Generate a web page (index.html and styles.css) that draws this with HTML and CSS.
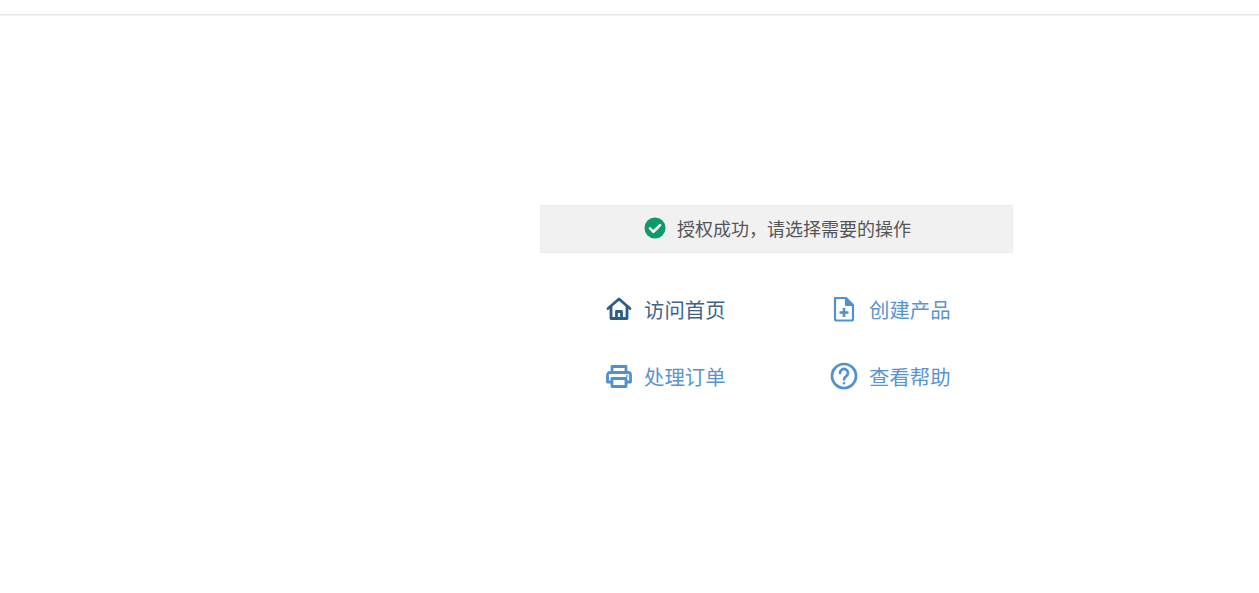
FILE: index.html
```html
<!DOCTYPE html>
<html lang="zh-CN">
<head>
<meta charset="utf-8">
<title>授权成功</title>
<link rel="stylesheet" href="styles.css">
</head>
<body>
<header class="topbar"></header>
<main class="panel">
  <div class="notice">
    <svg class="notice-icon" viewBox="0 0 22 22" width="22" height="22"><circle cx="11" cy="11" r="10.5" fill="#0b9a68"/><path d="M6 11.4l3.4 3.3L16 8.2" fill="none" stroke="#fff" stroke-width="2.6" stroke-linecap="round" stroke-linejoin="round"/></svg>
    <span class="notice-text">授权成功，请选择需要的操作</span>
  </div>
  <nav class="actions">
    <a class="action action-active" href="#">
      <span class="icon-slot"><svg viewBox="0 0 26 24" width="26" height="24" fill="none" stroke="currentColor" stroke-width="2.8" stroke-linejoin="round" stroke-linecap="round"><path d="M2 11.5 13 2l11 9.5"/><path d="M5 9.5V21.5h16V9.5"/><path d="M10.5 21v-6.5h5V21"/></svg></span>
      <span>访问首页</span>
    </a>
    <a class="action" href="#">
      <span class="icon-slot"><svg viewBox="0 0 24 26" width="24" height="26" fill="none" stroke="currentColor" stroke-width="2.2" stroke-linejoin="round"><path d="M3 2h11l7 7v14a1.5 1.5 0 0 1-1.5 1.5h-15A1.5 1.5 0 0 1 3 23z"/><path d="M14 2v7h7" fill="currentColor"/><path d="M12 12v9M7.5 16.5h9" stroke-width="2.6"/></svg></span>
      <span>创建产品</span>
    </a>
    <a class="action" href="#">
      <span class="icon-slot"><svg viewBox="0 0 28 24" width="28" height="24" fill="none" stroke="currentColor" stroke-width="2.8" stroke-linejoin="round"><path d="M7 9V2.5h14V9"/><path d="M7 18H2.5V11a2.5 2.5 0 0 1 2.5-2.5h18a2.5 2.5 0 0 1 2.5 2.5v7H21"/><path d="M7 14.5h14v8H7z"/><circle cx="22" cy="12" r="1" fill="currentColor" stroke="none"/></svg></span>
      <span>处理订单</span>
    </a>
    <a class="action" href="#">
      <span class="icon-slot"><svg viewBox="0 0 28 28" width="28" height="28" fill="none" stroke="currentColor" stroke-width="2.7" stroke-linecap="round"><circle cx="14" cy="14" r="12"/><path d="M10 11a4 4 0 1 1 6.3 3.2c-1.4 1-2.3 1.7-2.3 3.3"/><circle cx="14" cy="21.3" r="1.2" fill="currentColor" stroke="none"/></svg></span>
      <span>查看帮助</span>
    </a>
  </nav>
</main>
</body>
</html>
```
FILE: styles.css
```css
html, body {
  margin: 0;
  padding: 0;
  background: #fff;
}
body {
  font-family: "Noto Sans CJK SC", "Liberation Sans", sans-serif;
  height: 593px;
  overflow: hidden;
}
.topbar {
  height: 14px;
  border-bottom: 1px solid #e2e5e9;
  box-shadow: 0 1px 1px #f1f2f4;
}
.panel {
  width: 473px;
  margin: 190px 0 0 540px;
}
.notice {
  box-sizing: border-box;
  height: 48px;
  background: #f1f1f1;
  border: 1px solid #ebebeb;
  display: flex;
  align-items: center;
  justify-content: center;
  gap: 11px;
  padding-left: 2px;
  color: #555;
  font-size: 18px;
}
.notice-text {
  margin-top: -2px;
}
.notice-icon {
  margin-top: -2px;
}
.actions {
  display: grid;
  grid-template-columns: 225px 181px;
  grid-auto-rows: 67px;
  padding: 22px 0 0 65px;
}
.action {
  display: flex;
  align-items: center;
  gap: 11px;
  color: #5a94cf;
  text-decoration: none;
  font-size: 20.4px;
}
.action-active {
  color: #3f6488;
}
.action-active svg {
  color: #2b5c8a;
}
.icon-slot {
  width: 28px;
  display: flex;
  justify-content: center;
  align-items: center;
  color: #4f90d0;
}
```
